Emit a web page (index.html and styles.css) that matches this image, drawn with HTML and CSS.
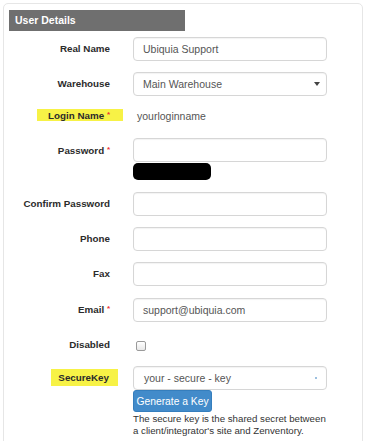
FILE: index.html
```html
<!DOCTYPE html>
<html>
<head>
<meta charset="utf-8">
<link rel="stylesheet" href="styles.css">
</head>
<body>
<div class="panel">
  <div class="header">User Details</div>
  <div class="form">
    <div class="row r-first">
      <label class="lbl">Real Name</label>
      <div class="field"><div class="input">Ubiquia Support</div></div>
    </div>
    <div class="row">
      <label class="lbl">Warehouse</label>
      <div class="field"><div class="input select">Main Warehouse<span class="caret"></span></div></div>
    </div>
    <div class="row r-login">
      <label class="lbl"><span class="hl hl-login">Login Name <span class="req">*</span></span></label>
      <div class="field"><span class="static">yourloginname</span></div>
    </div>
    <div class="row r-top r-pass">
      <label class="lbl lbl-top">Password <span class="req">*</span></label>
      <div class="field">
        <div class="input"></div>
        <div class="redact"></div>
      </div>
    </div>
    <div class="row">
      <label class="lbl">Confirm Password</label>
      <div class="field"><div class="input"></div></div>
    </div>
    <div class="row">
      <label class="lbl">Phone</label>
      <div class="field"><div class="input"></div></div>
    </div>
    <div class="row">
      <label class="lbl">Fax</label>
      <div class="field"><div class="input"></div></div>
    </div>
    <div class="row">
      <label class="lbl">Email <span class="req">*</span></label>
      <div class="field"><div class="input">support@ubiquia.com</div></div>
    </div>
    <div class="row r-check">
      <label class="lbl">Disabled</label>
      <div class="field"><span class="checkbox"></span></div>
    </div>
    <div class="row r-top">
      <label class="lbl lbl-top"><span class="hl hl-key">SecureKey</span></label>
      <div class="field">
        <div class="input key">your - secure - key<span class="dot"></span></div>
        <button class="btn">Generate a Key</button>
        <p class="help">The secure key is the shared secret between a client/integrator's site and Zenventory.</p>
      </div>
    </div>
  </div>
</div>
</body>
</html>
```

FILE: styles.css
```css
* { box-sizing: border-box; }
html, body { margin: 0; padding: 0; background: #fff; }
body {
  font-family: "Liberation Sans", Arial, sans-serif;
  color: #333;
  width: 366px;
  height: 441px;
  overflow: hidden;
}
.panel {
  margin: 3px 3px 0 3px;
  border: 1px solid #e6e6e6;
  border-radius: 5px;
  padding: 6px 5px 0 5px;
  height: 460px;
}
.header {
  width: 176px;
  height: 21px;
  background: #6f6f6f;
  color: #fff;
  font-weight: bold;
  font-size: 10.5px;
  line-height: 21px;
  padding-left: 6px;
}
.form { padding-top: 6px; }
.row {
  display: grid;
  grid-template-columns: 101px 194px;
  column-gap: 23px;
  align-items: center;
  margin-bottom: 11px;
}
.row.r-top { align-items: start; }
.lbl {
  text-align: right;
  font-weight: bold;
  font-size: 9.8px;
  color: #2b2b2b;
  line-height: 24px;
  white-space: nowrap;
}
.req { color: #e33; font-size: 8px; vertical-align: 2px; }
.input {
  height: 24px;
  border: 1px solid #d6d6d6;
  border-radius: 4px;
  box-shadow: inset 0 1px 1px rgba(0,0,0,0.05);
  font-size: 10.5px;
  color: #555;
  line-height: 22px;
  padding-left: 9px;
  position: relative;
  background: #fff;
}
.select { padding-left: 9px; }
.caret {
  position: absolute;
  right: 6px;
  top: 9px;
  width: 0; height: 0;
  border-left: 3px solid transparent;
  border-right: 3px solid transparent;
  border-top: 4px solid #444;
}
.r-login { height: 20px; }
.r-login .lbl { line-height: 12px; }
.static { font-size: 10.5px; color: #555; padding-left: 4px; position: relative; top: -2px; }
.hl {
  background: #f7f246;
  display: inline-block;
}
.hl-login {
  padding: 0 13px 0 11px;
  margin-right: -13px;
  line-height: 11px;
  position: relative;
  top: -2px;
}
.hl-key {
  padding: 0 9px 0 7px;
  margin-right: -8px;
  line-height: 17px;
  margin-top: 1px;
}
.r-pass { margin-bottom: 12px; }
.redact {
  width: 78px;
  height: 17px;
  margin-top: 1px;
  background: #000;
  border-radius: 5px;
}
.r-check { height: 22px; }
.checkbox {
  display: block;
  width: 10px;
  height: 10px;
  border: 1px solid #9a9a9a;
  border-radius: 2px;
  background: linear-gradient(#fff, #e8e8e8);
  margin-left: 3px;
  margin-top: 2px;
}
.key { height: 24px; padding-left: 10px; }
.dot {
  position: absolute;
  right: 9px;
  top: 10px;
  width: 2px; height: 2px;
  background: #9cc0e0;
}
.btn {
  display: block;
  margin-top: 0;
  height: 22px;
  width: 79px;
  padding: 0;
  background: #428bca;
  border: 1px solid #357ebd;
  border-radius: 3px;
  color: #fff;
  font-family: "Liberation Sans", Arial, sans-serif;
  font-size: 10.3px;
}
.help {
  margin: 1px 0 0 0;
  width: 197px;
  font-size: 9.7px;
  line-height: 12px;
  color: #333;
}
```
